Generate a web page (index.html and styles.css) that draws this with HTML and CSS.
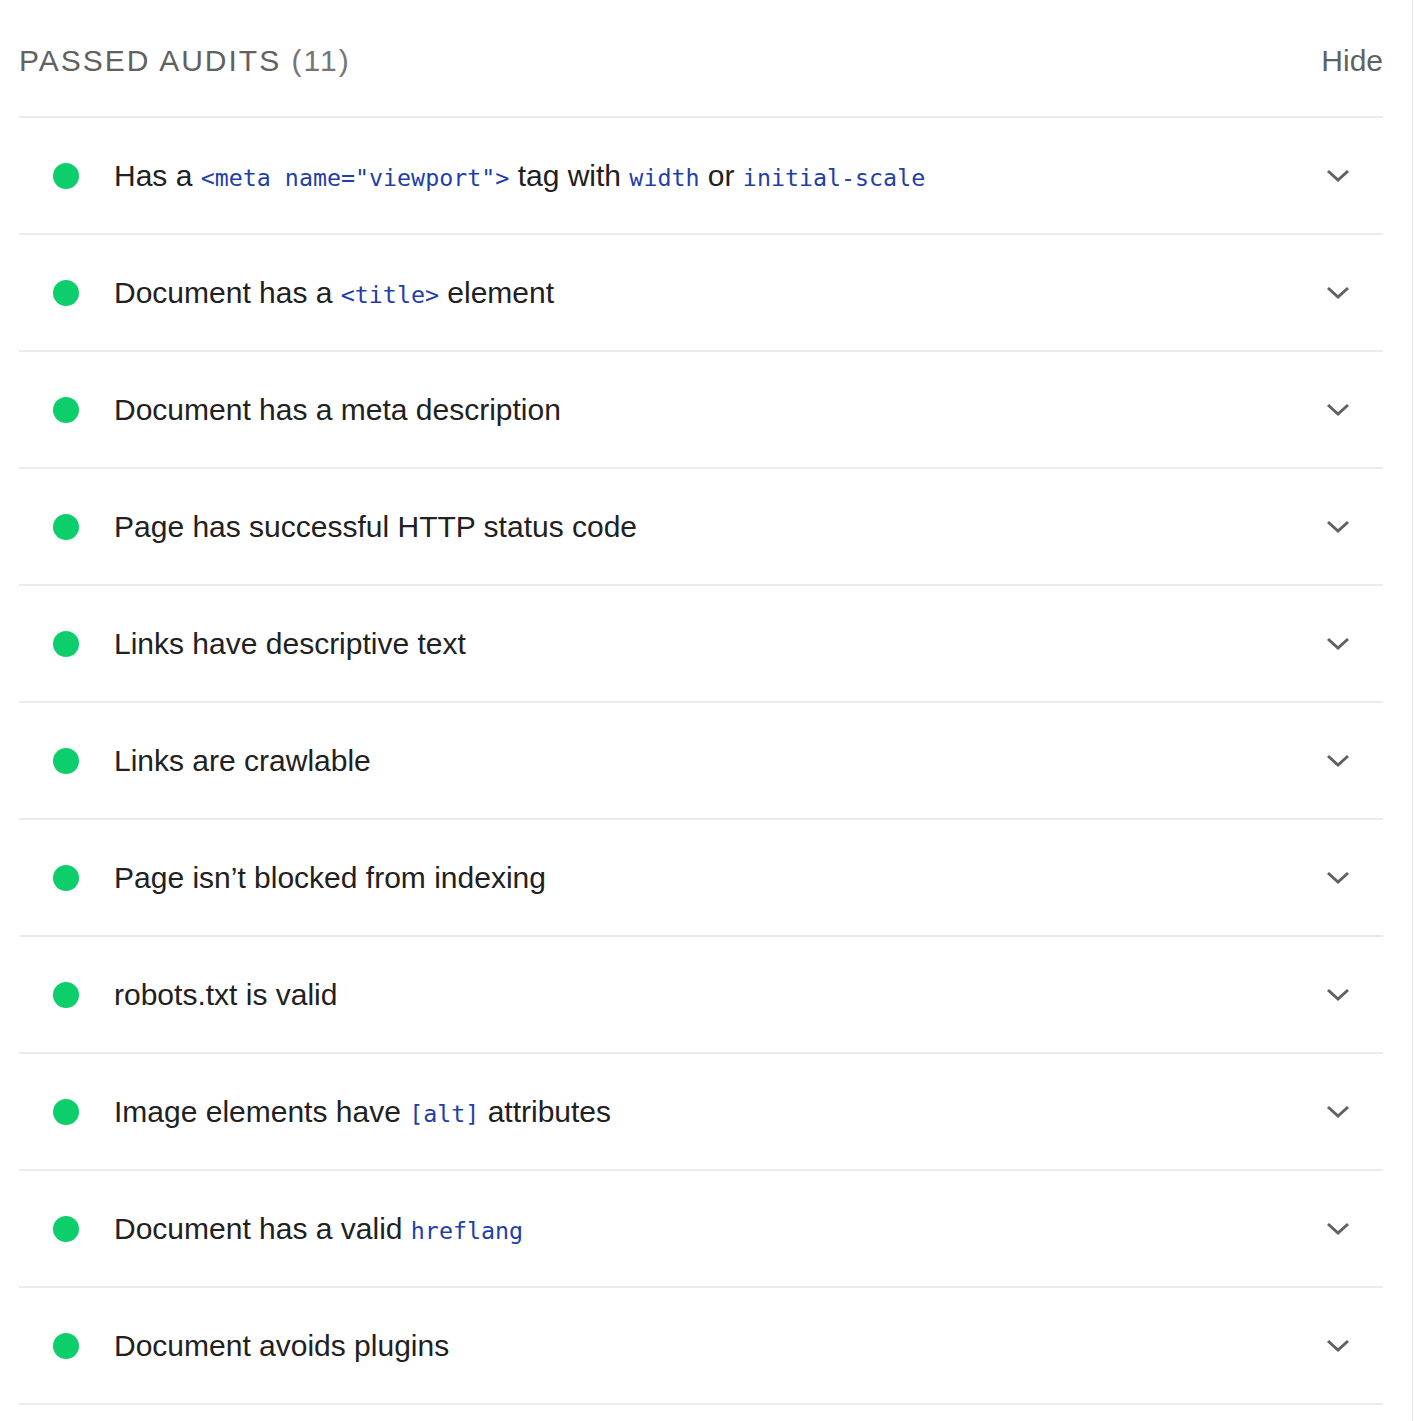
FILE: index.html
```html
<!DOCTYPE html>
<html>
<head>
<meta charset="utf-8">
<title>Passed audits</title>
<link rel="stylesheet" href="styles.css">
</head>
<body>
<div class="page">
  <section class="group">
    <div class="group-header">
      <span class="group-title">Passed audits <span class="count">(11)</span></span>
      <span class="toggle">Hide</span>
    </div>
    <div class="audit"><span class="dot"></span><span class="title">Has a <code>&lt;meta name="viewport"&gt;</code> tag with <code>width</code> or <code>initial-scale</code></span><svg class="chev" viewBox="0 0 24 14"><path d="M2 2 L12 11 L22 2" /></svg></div>
    <div class="audit"><span class="dot"></span><span class="title">Document has a <code>&lt;title&gt;</code> element</span><svg class="chev" viewBox="0 0 24 14"><path d="M2 2 L12 11 L22 2" /></svg></div>
    <div class="audit"><span class="dot"></span><span class="title">Document has a meta description</span><svg class="chev" viewBox="0 0 24 14"><path d="M2 2 L12 11 L22 2" /></svg></div>
    <div class="audit"><span class="dot"></span><span class="title">Page has successful HTTP status code</span><svg class="chev" viewBox="0 0 24 14"><path d="M2 2 L12 11 L22 2" /></svg></div>
    <div class="audit"><span class="dot"></span><span class="title">Links have descriptive text</span><svg class="chev" viewBox="0 0 24 14"><path d="M2 2 L12 11 L22 2" /></svg></div>
    <div class="audit"><span class="dot"></span><span class="title">Links are crawlable</span><svg class="chev" viewBox="0 0 24 14"><path d="M2 2 L12 11 L22 2" /></svg></div>
    <div class="audit"><span class="dot"></span><span class="title">Page isn’t blocked from indexing</span><svg class="chev" viewBox="0 0 24 14"><path d="M2 2 L12 11 L22 2" /></svg></div>
    <div class="audit"><span class="dot"></span><span class="title">robots.txt is valid</span><svg class="chev" viewBox="0 0 24 14"><path d="M2 2 L12 11 L22 2" /></svg></div>
    <div class="audit"><span class="dot"></span><span class="title">Image elements have <code>[alt]</code> attributes</span><svg class="chev" viewBox="0 0 24 14"><path d="M2 2 L12 11 L22 2" /></svg></div>
    <div class="audit"><span class="dot"></span><span class="title">Document has a valid <code>hreflang</code></span><svg class="chev" viewBox="0 0 24 14"><path d="M2 2 L12 11 L22 2" /></svg></div>
    <div class="audit"><span class="dot"></span><span class="title">Document avoids plugins</span><svg class="chev" viewBox="0 0 24 14"><path d="M2 2 L12 11 L22 2" /></svg></div>
  </section>
</div>
</body>
</html>
```

FILE: styles.css
```css
html, body {
  margin: 0;
  padding: 0;
  background: #fff;
}
.page {
  width: 1412px;
  min-height: 1421px;
  border-right: 1px solid #e6e6e6;
  box-sizing: content-box;
  font-family: "Liberation Sans", Arial, sans-serif;
}
.group {
  margin: 0 29px 0 19px;
  padding-top: 1px;
}
.group-header {
  height: 117px;
  box-sizing: border-box;
  border-bottom: 2px solid #ebebeb;
  display: flex;
  align-items: center;
  justify-content: space-between;
  padding-top: 4px;
}
.group-title {
  text-transform: uppercase;
  color: #616161;
  font-size: 30px;
  letter-spacing: 2px;
}
.count {
  color: #757575;
}
.toggle {
  color: #616161;
  font-size: 30px;
}
.audit {
  height: 117px;
  box-sizing: border-box;
  border-bottom: 2px solid #ebebeb;
  display: flex;
  align-items: center;
}
.dot {
  width: 26px;
  height: 26px;
  border-radius: 50%;
  background: #0cce6b;
  margin-left: 34px;
  margin-right: 35px;
  flex: none;
}
.title {
  flex: 1;
  font-size: 30px;
  color: #212121;
}
code {
  font-family: "DejaVu Sans Mono", monospace;
  font-size: 23.3px;
  color: #1f3fa8;
}
.chev {
  width: 24px;
  height: 14px;
  margin-right: 33px;
  flex: none;
  fill: none;
  stroke: #616161;
  stroke-width: 3;
}
```
